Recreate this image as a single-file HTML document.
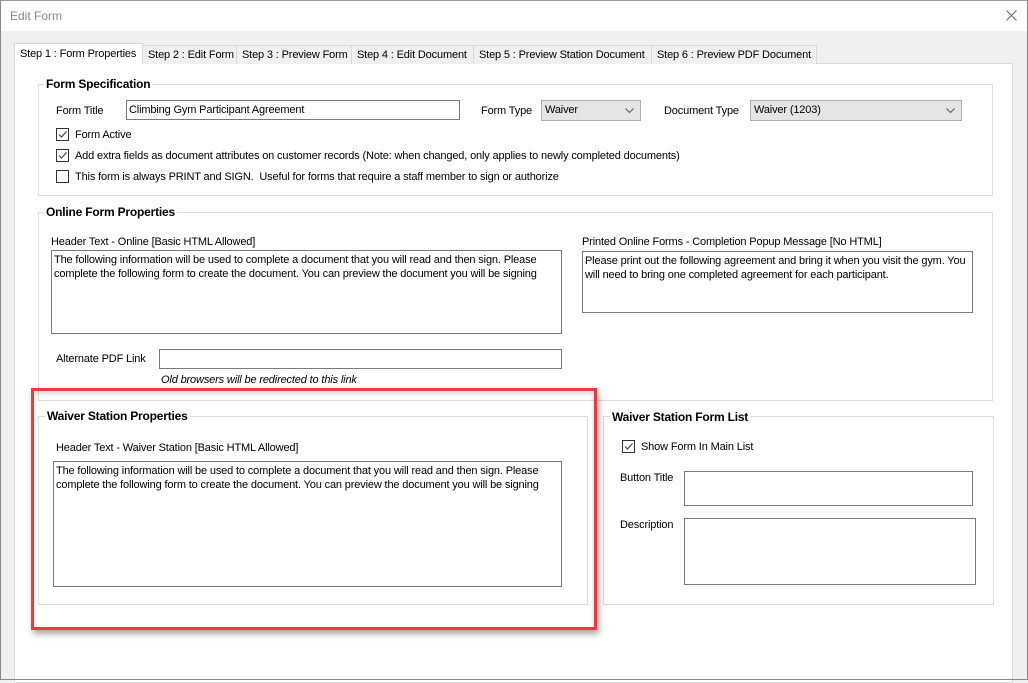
<!DOCTYPE html>
<html><head><meta charset="utf-8"><style>
*{box-sizing:border-box;margin:0;padding:0}
body{width:1028px;height:653px;position:relative;overflow:hidden;background:#f0f0f0;font-family:"Liberation Sans",Arial,sans-serif;font-size:11px;letter-spacing:-0.15px;color:#000}
.a{position:absolute;white-space:nowrap;margin-top:1px}
.tb{position:absolute;left:0;top:0;width:1028px;height:31px;background:#fff}
.win{position:absolute;left:0;top:0;width:1028px;height:680px;border:1px solid #888;border-top:1px solid #999}
.panel{position:absolute;left:14px;top:63px;width:999px;height:620px;background:#fff;border:1px solid #d9d9d9}
.tab{position:absolute;top:45px;height:19px;background:#f0f0f0;border:1px solid #d9d9d9;border-bottom:none;padding:3px 5px 0;white-space:nowrap;overflow:hidden}
.grp{position:absolute;border:1px solid #dcdcdc}
.gt{position:absolute;background:#fff;font-weight:bold;font-size:12px;letter-spacing:-0.2px;padding:0 2px;white-space:nowrap}
.in{position:absolute;background:#fff;border:1px solid #7a7a7a;padding:2px 2px;line-height:14px;white-space:normal}
.sel{position:absolute;background:#e5e5e5;border:1px solid #adadad;padding:3px 3px}
.sel svg{position:absolute;right:6px;top:7px}
.cb{position:absolute;width:13px;height:13px;border:1px solid #333;background:#fff}
.red{position:absolute;left:31px;top:388px;width:566px;height:242px;border:3px solid #f0393e;box-shadow:2px 4px 6px rgba(0,0,0,.35),inset 0 3px 4px rgba(0,0,0,.15)}
</style></head><body>
<div class="tb"></div>
<div class="a" style="left:10px;top:8px;color:#8a8a8a;font-size:12px;letter-spacing:0">Edit Form</div>
<svg class="a" style="left:1006px;top:10px;margin:0" width="11" height="11"><path d="M0.5 0.5L10.5 10.5M10.5 0.5L0.5 10.5" stroke="#666" stroke-width="1"/></svg>
<div class="panel"></div>
<div class="tab" style="left:14px;top:43px;height:21px;background:#fff;width:129px;padding-top:4px">Step 1 : Form Properties</div>
<div class="tab" style="left:142px;width:95px">Step 2 : Edit Form</div>
<div class="tab" style="left:236px;width:116px">Step 3 : Preview Form</div>
<div class="tab" style="left:351px;width:123px">Step 4 : Edit Document</div>
<div class="tab" style="left:473px;width:179px">Step 5 : Preview Station Document</div>
<div class="tab" style="left:651px;width:166px">Step 6 : Preview PDF Document</div>

<div class="grp" style="left:38px;top:84px;width:955px;height:112px"></div>
<div class="gt" style="left:44px;top:77px">Form Specification</div>
<div class="a" style="left:56px;top:104px">Form Title</div>
<div class="in" style="left:126px;top:100px;width:334px;height:20px;padding-top:2px">Climbing Gym Participant Agreement</div>
<div class="a" style="left:481px;top:104px">Form Type</div>
<div class="sel" style="left:541px;top:100px;width:100px;height:21px">Waiver<svg width="9" height="6"><path d="M0.5 0.5L4.5 4.5L8.5 0.5" fill="none" stroke="#555"/></svg></div>
<div class="a" style="left:664px;top:104px">Document Type</div>
<div class="sel" style="left:750px;top:100px;width:212px;height:21px">Waiver (1203)<svg width="9" height="6"><path d="M0.5 0.5L4.5 4.5L8.5 0.5" fill="none" stroke="#555"/></svg></div>
<div class="cb" style="left:56px;top:128px"><svg width="11" height="11"><path d="M2 5.5L4.5 8L9.5 2.5" fill="none" stroke="#444" stroke-width="1.2"/></svg></div>
<div class="a" style="left:75px;top:128px">Form Active</div>
<div class="cb" style="left:56px;top:149px"><svg width="11" height="11"><path d="M2 5.5L4.5 8L9.5 2.5" fill="none" stroke="#444" stroke-width="1.2"/></svg></div>
<div class="a" style="left:75px;top:149px">Add extra fields as document attributes on customer records (Note: when changed, only applies to newly completed documents)</div>
<div class="cb" style="left:56px;top:170px"></div>
<div class="a" style="left:75px;top:170px">This form is always PRINT and SIGN.&nbsp; Useful for forms that require a staff member to sign or authorize</div>

<div class="grp" style="left:38px;top:212px;width:955px;height:189px"></div>
<div class="gt" style="left:44px;top:205px">Online Form Properties</div>
<div class="a" style="left:51px;top:235px">Header Text - Online [Basic HTML Allowed]</div>
<div class="in" style="left:51px;top:250px;width:511px;height:84px">The following information will be used to complete a document that you will read and then sign. Please complete the following form to create the document. You can preview the document you will be signing</div>
<div class="a" style="left:582px;top:235px">Printed Online Forms - Completion Popup Message [No HTML]</div>
<div class="in" style="left:582px;top:251px;width:391px;height:62px">Please print out the following agreement and bring it when you visit the gym. You will need to bring one completed agreement for each participant.</div>
<div class="a" style="left:56px;top:352px">Alternate PDF Link</div>
<div class="in" style="left:159px;top:349px;width:403px;height:20px"></div>
<div class="a" style="left:161px;top:373px;font-style:italic">Old browsers will be redirected to this link</div>

<div class="grp" style="left:38px;top:416px;width:550px;height:189px"></div>
<div class="gt" style="left:45px;top:409px">Waiver Station Properties</div>
<div class="a" style="left:56px;top:441px">Header Text - Waiver Station [Basic HTML Allowed]</div>
<div class="in" style="left:53px;top:461px;width:509px;height:126px">The following information will be used to complete a document that you will read and then sign. Please complete the following form to create the document. You can preview the document you will be signing</div>

<div class="grp" style="left:603px;top:416px;width:391px;height:189px"></div>
<div class="gt" style="left:610px;top:410px">Waiver Station Form List</div>
<div class="cb" style="left:622px;top:440px"><svg width="11" height="11"><path d="M2 5.5L4.5 8L9.5 2.5" fill="none" stroke="#444" stroke-width="1.2"/></svg></div>
<div class="a" style="left:641px;top:440px">Show Form In Main List</div>
<div class="a" style="left:620px;top:471px">Button Title</div>
<div class="in" style="left:684px;top:471px;width:289px;height:35px"></div>
<div class="a" style="left:620px;top:518px">Description</div>
<div class="in" style="left:684px;top:518px;width:292px;height:67px"></div>

<div class="red"></div>
<div class="win"></div>
</body></html>
